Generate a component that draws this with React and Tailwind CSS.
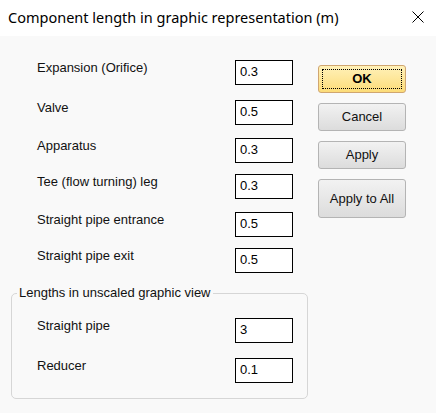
import React from 'react';

const ROWS = [
  { label: 'Expansion (Orifice)', value: '0.3', gap: 'mt-0' },
  { label: 'Valve', value: '0.5', gap: 'mt-[15px]' },
  { label: 'Apparatus', value: '0.3', gap: 'mt-[13px]' },
  { label: 'Tee (flow turning) leg', value: '0.3', gap: 'mt-[11px]' },
  { label: 'Straight pipe entrance', value: '0.5', gap: 'mt-[13px]' },
  { label: 'Straight pipe exit', value: '0.5', gap: 'mt-[11px]' },
];

const body = { fontFamily: '"Liberation Sans", Arial, sans-serif' };

function Field({ label, value, gap }) {
  return (
    <div className={`flex items-start ${gap}`}>
      <span className="w-[198px] text-[13px] leading-[15px] text-[#111]">{label}</span>
      <input
        readOnly
        defaultValue={value}
        className="w-[58px] h-[25px] border border-black bg-white px-[4px] pb-[3px] text-[13px] text-black outline-none"
        style={body}
      />
    </div>
  );
}

function Btn({ children, h = 'h-[28px]' }) {
  return (
    <button className={`w-[88px] ${h} rounded-[3px] border border-[#b4b4b4] bg-gradient-to-b from-[#f2f2f2] to-[#dcdcdc] text-[13px] text-[#111]`} style={body}>
      {children}
    </button>
  );
}

export default function App() {
  return (
    <div className="w-[436px] h-[413px] flex flex-col bg-[#f9f9f9] overflow-hidden">
      {/* Title bar */}
      <div className="h-[36px] bg-white flex items-center justify-between pl-2 pr-[12px]">
        <span className="text-[14.5px] text-black pb-[1px]" style={{ fontFamily: '"Noto Sans", "Open Sans", sans-serif' }}>
          Component length in graphic representation (m)
        </span>
        <svg width="12" height="12" viewBox="0 0 12 12" className="mb-[2px]">
          <path d="M0.5 0.5 L11.5 11.5 M11.5 0.5 L0.5 11.5" stroke="#000" strokeWidth="1" fill="none" />
        </svg>
      </div>

      {/* Body */}
      <div className="flex-1" style={body}>
        <div className="flex pt-[24px]">
          <div className="flex flex-col pl-[37px]">
            {ROWS.map((r) => <Field key={r.label} {...r} />)}
          </div>
          <div className="flex flex-col gap-[10px] ml-[25px] mt-[5px]">
            <button className="w-[88px] h-[28px] rounded-[3px] border border-[#d0a670] bg-gradient-to-b from-[#fff1b8] to-[#fcdc78] p-[3px]">
              <div className="w-full h-full border border-dotted border-black flex items-center justify-center text-[13px] font-bold text-black">
                OK
              </div>
            </button>
            <Btn>Cancel</Btn>
            <Btn>Apply</Btn>
            <Btn h="h-[39px]">Apply to All</Btn>
          </div>
        </div>

        {/* Group box */}
        <div className="relative ml-[11px] mt-[20px] w-[297px] h-[106px] border border-[#d6d6d6] rounded-[5px] pt-[24px] pl-[25px]">
          <span className="absolute left-[5px] top-[-9px] px-[2px] bg-[#f9f9f9] text-[13px] leading-[15px] text-[#111]">
            Lengths in unscaled graphic view
          </span>
          <Field label="Straight pipe" value="3" gap="mt-0" />
          <Field label="Reducer" value="0.1" gap="mt-[15px]" />
        </div>
      </div>
    </div>
  );
}
